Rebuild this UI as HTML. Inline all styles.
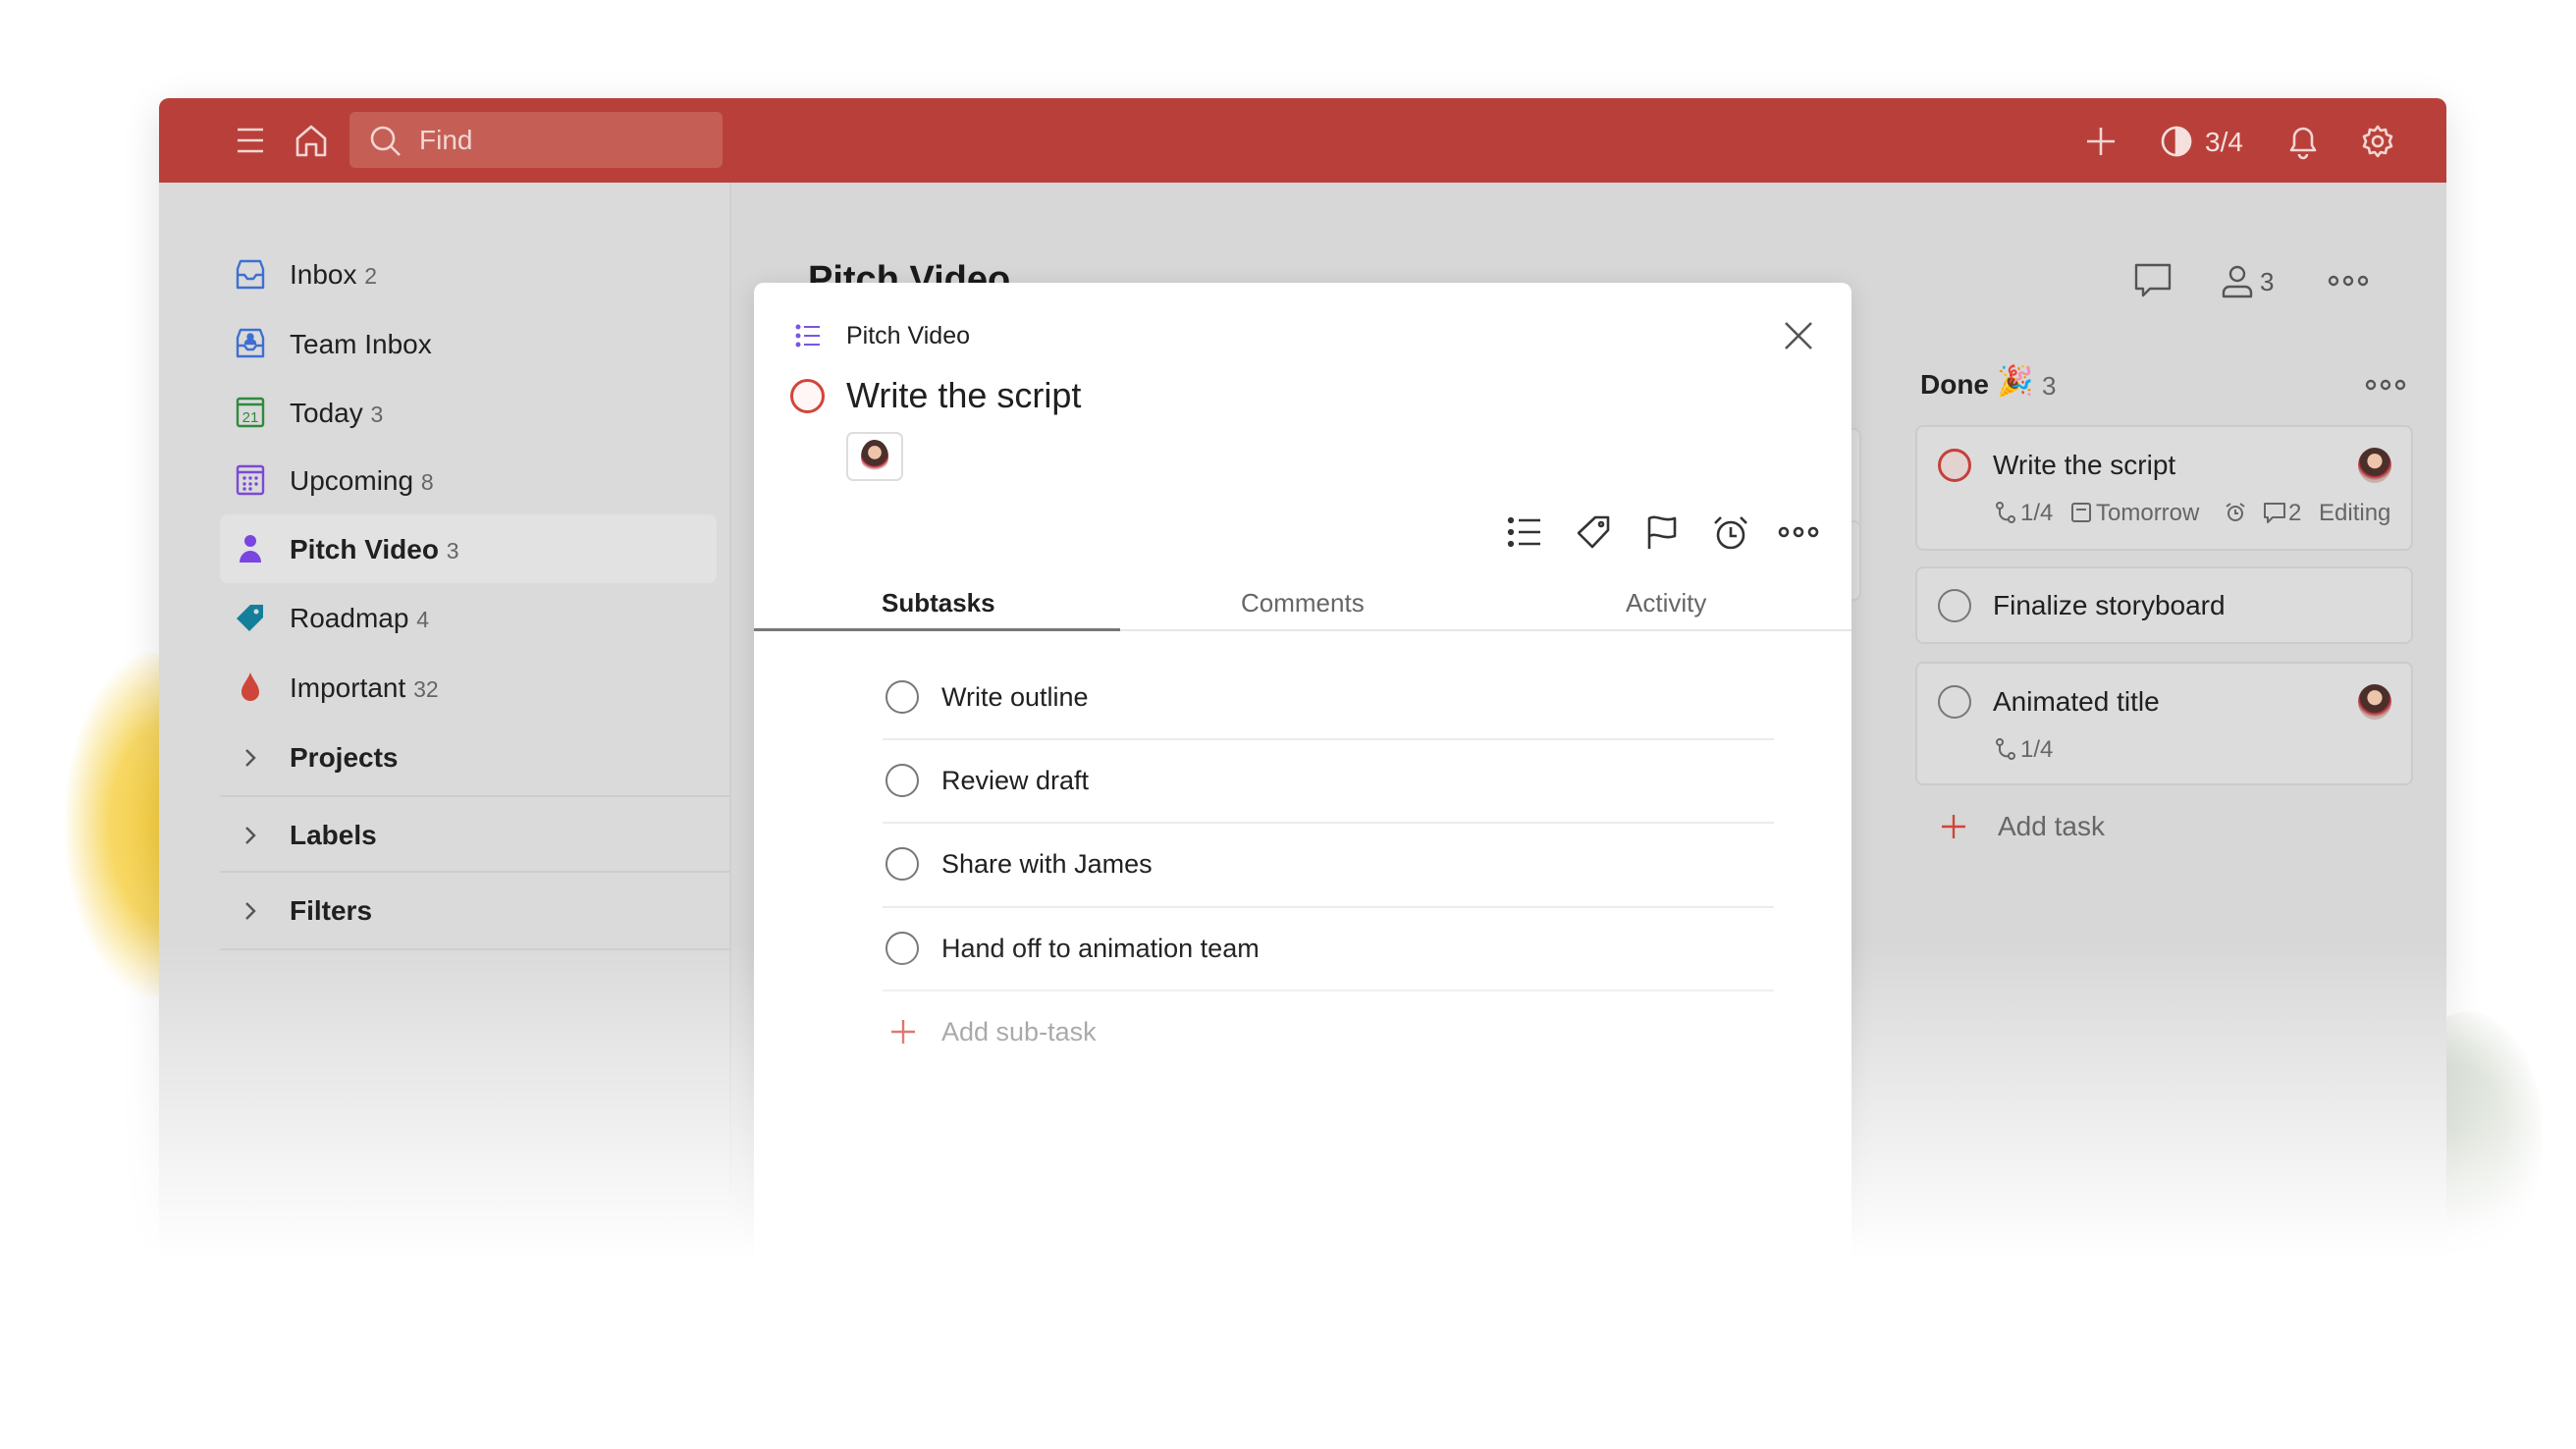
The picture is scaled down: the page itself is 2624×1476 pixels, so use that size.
<!DOCTYPE html>
<html><head><meta charset="utf-8"><style>
*{margin:0;padding:0;box-sizing:border-box}
body{width:2624px;height:1476px;background:#fff;position:relative;overflow:hidden;font-family:"Liberation Sans",sans-serif;color:#202020}
.a{position:absolute}
.t{position:absolute;white-space:nowrap;line-height:1}
svg{position:absolute;overflow:visible}
</style></head><body>
<!-- blobs -->
<div class="a" style="left:66px;top:660px;width:150px;height:360px;border-radius:50%;background:radial-gradient(ellipse at 70% 50%,#f5cd3e 0%,#f7d865 40%,rgba(250,230,150,0) 72%)"></div>
<div class="a" style="left:2440px;top:1030px;width:150px;height:250px;border-radius:50%;background:radial-gradient(ellipse at 40% 50%,#b3c0ab 0%,#cad3c4 40%,rgba(220,226,216,0) 75%)"></div>
<!-- app -->
<div class="a" style="left:162px;top:100px;width:2330px;height:1200px;background:#d7d7d7;border-radius:10px 10px 0 0;box-shadow:0 10px 40px rgba(0,0,0,.12);overflow:hidden">
 <div class="a" style="left:0;top:0;width:2330px;height:86px;background:#b9403a"></div>
 <div class="a" style="left:0;top:86px;width:583px;height:1200px;background:#dadada;border-right:2px solid #cfcfcf"></div>
</div>
<!-- header icons -->
<svg style="left:240px;top:128px" width="30" height="30" fill="none" stroke="#f3d6d3" stroke-width="2.6"><path d="M2 4h26M2 15h26M2 26h26"/></svg>
<svg style="left:300px;top:126px" width="34" height="34" fill="none" stroke="#f3d6d3" stroke-width="2.6" stroke-linejoin="round"><path d="M3 15L17 3l14 12v17H22V21h-10v11H3z"/></svg>
<div class="a" style="left:356px;top:114px;width:380px;height:57px;background:#c55f56;border-radius:6px"></div>
<svg style="left:376px;top:127px" width="34" height="34" fill="none" stroke="#f3d6d3" stroke-width="2.6"><circle cx="14" cy="14" r="11"/><path d="M22 22l9 9"/></svg>
<div class="t" style="left:427px;top:129px;font-size:28px;color:#f3d6d3">Find</div>
<svg style="left:2124px;top:128px" width="32" height="32" stroke="#f3d6d3" stroke-width="2.6"><path d="M16 2v28M2 16h28"/></svg>
<svg style="left:2200px;top:127px" width="34" height="34" fill="none" stroke="#f6e0dd" stroke-width="2.6"><circle cx="17" cy="17" r="14"/><path d="M17 3a14 14 0 0 1 0 28z" fill="#f6e0dd"/></svg>
<div class="t" style="left:2246px;top:131px;font-size:28px;color:#f6e0dd">3/4</div>
<svg style="left:2330px;top:126px" width="32" height="36" fill="none" stroke="#f3d6d3" stroke-width="2.6" stroke-linejoin="round"><path d="M4 27h24l-3-5V14a9 9 0 0 0-18 0v8z"/><path d="M12 31a4 4 0 0 0 8 0"/></svg>
<svg style="left:2404px;top:126px" width="36" height="36" fill="none" stroke="#f3d6d3" stroke-width="2.6"><circle cx="18" cy="18" r="5"/><path d="M18 3l3 4 5-1 1 5 5 2-2 5 2 5-5 2-1 5-5-1-3 4-3-4-5 1-1-5-5-2 2-5-2-5 5-2 1-5 5 1z" stroke-linejoin="round"/></svg>
<!-- sidebar -->
<div class="a" style="left:224px;top:524px;width:506px;height:70px;background:#e2e2e2;border-radius:8px"></div>
<svg style="left:240px;top:264px" width="30" height="32" fill="none" stroke="#3f6fd2" stroke-width="2.4" stroke-linejoin="round"><path d="M5 2h20l3 8v19H2V10z"/><path d="M2 16h7l3 4h6l3-4h7"/></svg>
<svg style="left:240px;top:334px" width="30" height="32" fill="none" stroke="#3f6fd2" stroke-width="2.4" stroke-linejoin="round"><path d="M5 2h20l3 8v19H2V10z"/><path d="M2 18h7l3 4h6l3-4h7"/><circle cx="15" cy="9" r="2.5" fill="#3f6fd2"/><path d="M10 16a5 4 0 0 1 10 0z" fill="#3f6fd2"/></svg>
<svg style="left:240px;top:404px" width="30" height="32" fill="none" stroke="#2e8a3e" stroke-width="2.4"><rect x="2" y="2" width="26" height="28" rx="2"/><path d="M2 8h26"/><text x="15" y="26" font-size="15" fill="#2e8a3e" stroke="none" text-anchor="middle" font-family="Liberation Sans">21</text></svg>
<svg style="left:240px;top:473px" width="30" height="32" fill="none" stroke="#7a4ad6" stroke-width="2.4"><rect x="2" y="2" width="26" height="28" rx="2"/><path d="M2 8h26"/><g fill="#7a4ad6" stroke="none"><circle cx="9" cy="14" r="1.7"/><circle cx="15" cy="14" r="1.7"/><circle cx="21" cy="14" r="1.7"/><circle cx="9" cy="20" r="1.7"/><circle cx="15" cy="20" r="1.7"/><circle cx="21" cy="20" r="1.7"/><circle cx="9" cy="25" r="1.7"/><circle cx="15" cy="25" r="1.7"/></g></svg>
<svg style="left:242px;top:544px" width="26" height="30" fill="#7a45e0"><circle cx="13" cy="7" r="6"/><path d="M2 29a11 12 0 0 1 22 0z"/></svg>
<svg style="left:240px;top:614px" width="30" height="30" fill="#137f9a"><path d="M15 2h13v13L14 29 1 16z"/><circle cx="21" cy="9" r="2.5" fill="#dadada"/></svg>
<svg style="left:244px;top:684px" width="22" height="32" fill="#d0453a"><path d="M11 1C8 9 2 14 2 21a9 9 0 0 0 18 0c0-7-6-12-9-20z"/></svg>
<div class="t" style="left:295px;top:266px;font-size:28px">Inbox <span style="font-size:23px;color:#666">2</span></div>
<div class="t" style="left:295px;top:337px;font-size:28px">Team Inbox</div>
<div class="t" style="left:295px;top:407px;font-size:28px">Today <span style="font-size:23px;color:#666">3</span></div>
<div class="t" style="left:295px;top:476px;font-size:28px">Upcoming <span style="font-size:23px;color:#666">8</span></div>
<div class="t" style="left:295px;top:546px;font-size:28px;font-weight:bold">Pitch Video <span style="font-size:23px;color:#666;font-weight:normal">3</span></div>
<div class="t" style="left:295px;top:616px;font-size:28px">Roadmap <span style="font-size:23px;color:#666">4</span></div>
<div class="t" style="left:295px;top:687px;font-size:28px">Important <span style="font-size:23px;color:#666">32</span></div>
<div class="t" style="left:295px;top:758px;font-size:28px;font-weight:bold">Projects</div>
<div class="t" style="left:295px;top:837px;font-size:28px;font-weight:bold">Labels</div>
<div class="t" style="left:295px;top:914px;font-size:28px;font-weight:bold">Filters</div>
<svg style="left:248px;top:762px" width="14" height="20" fill="none" stroke="#555" stroke-width="2.4"><path d="M3 2l8 8-8 8"/></svg>
<svg style="left:248px;top:841px" width="14" height="20" fill="none" stroke="#555" stroke-width="2.4"><path d="M3 2l8 8-8 8"/></svg>
<svg style="left:248px;top:918px" width="14" height="20" fill="none" stroke="#555" stroke-width="2.4"><path d="M3 2l8 8-8 8"/></svg>
<div class="a" style="left:224px;top:810px;width:521px;height:2px;background:#cdcdcd"></div>
<div class="a" style="left:224px;top:887px;width:521px;height:2px;background:#cdcdcd"></div>
<div class="a" style="left:224px;top:966px;width:521px;height:2px;background:#cdcdcd"></div>
<!-- main -->
<div class="t" style="left:823px;top:266px;font-size:38px;font-weight:bold;color:#1a1a1a">Pitch Video</div>
<svg style="left:2174px;top:268px" width="38" height="36" fill="none" stroke="#555" stroke-width="2.4" stroke-linejoin="round"><path d="M2 2h34v24H16l-7 7v-7H2z"/></svg>
<svg style="left:2262px;top:270px" width="34" height="34" fill="none" stroke="#555" stroke-width="2.4"><circle cx="17" cy="9" r="7"/><path d="M3 32v-4a6 6 0 0 1 6-6h16a6 6 0 0 1 6 6v4z" stroke-linejoin="round"/></svg>
<div class="t" style="left:2302px;top:274px;font-size:26px;color:#555">3</div>
<svg style="left:2372px;top:280px" width="40" height="12" fill="none" stroke="#555" stroke-width="2.4"><circle cx="5" cy="6" r="4"/><circle cx="20" cy="6" r="4"/><circle cx="35" cy="6" r="4"/></svg>
<!-- background card edges -->
<div class="a" style="left:1870px;top:436px;width:26px;height:126px;background:#dedede;border:2px solid #cfcfcf;border-radius:8px"></div>
<div class="a" style="left:1870px;top:530px;width:26px;height:82px;background:#dedede;border:2px solid #cfcfcf;border-radius:8px"></div>
<!-- done column -->
<div class="t" style="left:1956px;top:378px;font-size:28px;font-weight:bold">Done</div>
<div class="t" style="left:2034px;top:374px;font-size:30px">🎉</div>
<div class="t" style="left:2080px;top:380px;font-size:26px;color:#666">3</div>
<svg style="left:2410px;top:386px" width="40" height="12" fill="none" stroke="#555" stroke-width="2.4"><circle cx="5" cy="6" r="4"/><circle cx="20" cy="6" r="4"/><circle cx="35" cy="6" r="4"/></svg>
<div class="a" style="left:1951px;top:433px;width:507px;height:128px;background:#dcdcdc;border:2px solid #cbcbcb;border-radius:8px"></div>
<div class="a" style="left:1951px;top:577px;width:507px;height:79px;background:#dcdcdc;border:2px solid #cbcbcb;border-radius:8px"></div>
<div class="a" style="left:1951px;top:674px;width:507px;height:126px;background:#dcdcdc;border:2px solid #cbcbcb;border-radius:8px"></div>
<div class="a" style="left:1974px;top:457px;width:34px;height:34px;border:3px solid #c5403a;border-radius:50%;background:#e2d2d0"></div>
<div class="a" style="left:1974px;top:600px;width:34px;height:34px;border:2.5px solid #777;border-radius:50%"></div>
<div class="a" style="left:1974px;top:698px;width:34px;height:34px;border:2.5px solid #777;border-radius:50%"></div>
<div class="t" style="left:2030px;top:460px;font-size:28px">Write the script</div>
<div class="t" style="left:2030px;top:603px;font-size:28px">Finalize storyboard</div>
<div class="t" style="left:2030px;top:701px;font-size:28px">Animated title</div>
<!-- meta row -->
<svg style="left:2032px;top:510px" width="22" height="24" fill="none" stroke="#666" stroke-width="2"><circle cx="5" cy="5" r="3"/><circle cx="17" cy="19" r="3"/><path d="M5 8v4a7 7 0 0 0 9 7"/></svg>
<div class="t" style="left:2058px;top:511px;font-size:24px;color:#666">1/4</div>
<svg style="left:2110px;top:512px" width="20" height="20" fill="none" stroke="#666" stroke-width="2"><rect x="1" y="1" width="18" height="18" rx="2"/><path d="M5 7h10"/></svg>
<div class="t" style="left:2135px;top:511px;font-size:24px;color:#666">Tomorrow</div>
<svg style="left:2266px;top:511px" width="22" height="22" fill="none" stroke="#666" stroke-width="2"><circle cx="11" cy="12" r="7"/><path d="M11 8v4h3M2 5l4-3M20 5l-4-3"/></svg>
<svg style="left:2306px;top:512px" width="22" height="22" fill="none" stroke="#666" stroke-width="2" stroke-linejoin="round"><path d="M1 1h20v14H9l-5 5v-5H1z"/></svg>
<div class="t" style="left:2331px;top:511px;font-size:24px;color:#666">2</div>
<div class="t" style="left:2362px;top:511px;font-size:24px;color:#666">Editing</div>
<svg style="left:2032px;top:751px" width="22" height="24" fill="none" stroke="#666" stroke-width="2"><circle cx="5" cy="5" r="3"/><circle cx="17" cy="19" r="3"/><path d="M5 8v4a7 7 0 0 0 9 7"/></svg>
<div class="t" style="left:2058px;top:752px;font-size:24px;color:#666">1/4</div>
<div class="a" style="left:2402px;top:456px;width:34px;height:36px;border-radius:50%;background:radial-gradient(circle at 50% 38%,#eec4ac 0 26%,#4a302a 28% 52%,#a8232e 55%,#c9b0a8 70%)"></div>
<div class="a" style="left:2402px;top:697px;width:34px;height:36px;border-radius:50%;background:radial-gradient(circle at 50% 38%,#eec4ac 0 26%,#4a302a 28% 52%,#a8232e 55%,#c9b0a8 70%)"></div>
<svg style="left:1976px;top:828px" width="28" height="28" stroke="#d0453a" stroke-width="2.4"><path d="M14 2v24M2 14h24"/></svg>
<div class="t" style="left:2035px;top:828px;font-size:28px;color:#666">Add task</div>
<!-- modal -->
<div class="a" style="left:768px;top:288px;width:1118px;height:1100px;background:#fff;border-radius:10px 10px 0 0;box-shadow:0 4px 24px rgba(0,0,0,.12)"></div>
<svg style="left:810px;top:330px" width="26" height="24" fill="#7a55e0" stroke="#7a55e0" stroke-width="2"><circle cx="3" cy="3" r="1.5"/><circle cx="3" cy="12" r="1.5"/><circle cx="3" cy="21" r="1.5"/><path d="M9 3h16M9 12h16M9 21h16" fill="none"/></svg>
<div class="t" style="left:862px;top:330px;font-size:25px">Pitch Video</div>
<svg style="left:1816px;top:326px" width="32" height="32" stroke="#555" stroke-width="2.6"><path d="M3 3l26 26M29 3L3 29"/></svg>
<div class="a" style="left:805px;top:386px;width:35px;height:35px;border:3.5px solid #d1453b;border-radius:50%;background:#fff6f5"></div>
<div class="t" style="left:862px;top:385px;font-size:36px">Write the script</div>
<div class="a" style="left:862px;top:440px;width:58px;height:50px;border:2px solid #ddd;border-radius:7px"></div>
<div class="a" style="left:877px;top:448px;width:28px;height:34px;border-radius:50%;background:radial-gradient(circle at 50% 38%,#eec4ac 0 26%,#4a302a 28% 52%,#a8232e 55%,#fff 72%)"></div>
<!-- toolbar -->
<svg style="left:1536px;top:526px" width="34" height="32" fill="#333" stroke="#333" stroke-width="2.6"><circle cx="3" cy="4" r="1.8"/><circle cx="3" cy="16" r="1.8"/><circle cx="3" cy="28" r="1.8"/><path d="M11 4h22M11 16h22M11 28h22" fill="none"/></svg>
<svg style="left:1605px;top:524px" width="36" height="36" fill="none" stroke="#333" stroke-width="2.6" stroke-linejoin="round"><path d="M20 3h13v13L17 33 3 19z"/><circle cx="26" cy="10" r="2"/></svg>
<svg style="left:1676px;top:524px" width="34" height="36" fill="none" stroke="#333" stroke-width="2.6" stroke-linejoin="round"><path d="M4 35V4c8-4 14 4 26 0v18c-12 4-18-4-26 0"/></svg>
<svg style="left:1744px;top:524px" width="38" height="38" fill="none" stroke="#333" stroke-width="2.6"><circle cx="19" cy="21" r="13"/><path d="M19 13v9h6M3 9l6-6M35 9l-6-6"/></svg>
<svg style="left:1812px;top:536px" width="40" height="12" fill="none" stroke="#333" stroke-width="2.6"><circle cx="5" cy="6" r="4"/><circle cx="20" cy="6" r="4"/><circle cx="35" cy="6" r="4"/></svg>
<!-- tabs -->
<div class="t" style="left:898px;top:601px;font-size:26px;font-weight:bold">Subtasks</div>
<div class="t" style="left:1264px;top:601px;font-size:26px;color:#666">Comments</div>
<div class="t" style="left:1656px;top:601px;font-size:26px;color:#666">Activity</div>
<div class="a" style="left:768px;top:641px;width:1118px;height:2px;background:#e6e6e6"></div>
<div class="a" style="left:768px;top:640px;width:373px;height:3px;background:#777"></div>
<!-- subtasks -->
<div class="a" style="left:902px;top:693px;width:34px;height:34px;border:2.5px solid #777;border-radius:50%"></div>
<div class="a" style="left:902px;top:778px;width:34px;height:34px;border:2.5px solid #777;border-radius:50%"></div>
<div class="a" style="left:902px;top:863px;width:34px;height:34px;border:2.5px solid #777;border-radius:50%"></div>
<div class="a" style="left:902px;top:949px;width:34px;height:34px;border:2.5px solid #777;border-radius:50%"></div>
<div class="t" style="left:959px;top:697px;font-size:27px">Write outline</div>
<div class="t" style="left:959px;top:782px;font-size:27px">Review draft</div>
<div class="t" style="left:959px;top:867px;font-size:27px">Share with James</div>
<div class="t" style="left:959px;top:953px;font-size:27px">Hand off to animation team</div>
<div class="a" style="left:899px;top:752px;width:908px;height:2px;background:#ececec"></div>
<div class="a" style="left:899px;top:837px;width:908px;height:2px;background:#ececec"></div>
<div class="a" style="left:899px;top:923px;width:908px;height:2px;background:#ececec"></div>
<div class="a" style="left:899px;top:1008px;width:908px;height:2px;background:#ececec"></div>
<svg style="left:906px;top:1037px" width="28" height="28" stroke="#d0453a" stroke-width="2.4"><path d="M14 2v24M2 14h24"/></svg>
<div class="t" style="left:959px;top:1038px;font-size:27px;color:#888">Add sub-task</div>
<!-- bottom fade -->
<div class="a" style="left:0;top:960px;width:2624px;height:340px;background:linear-gradient(rgba(255,255,255,0),#fff 95%)"></div>
<div class="a" style="left:0;top:1298px;width:2624px;height:178px;background:#fff"></div>
</body></html>
